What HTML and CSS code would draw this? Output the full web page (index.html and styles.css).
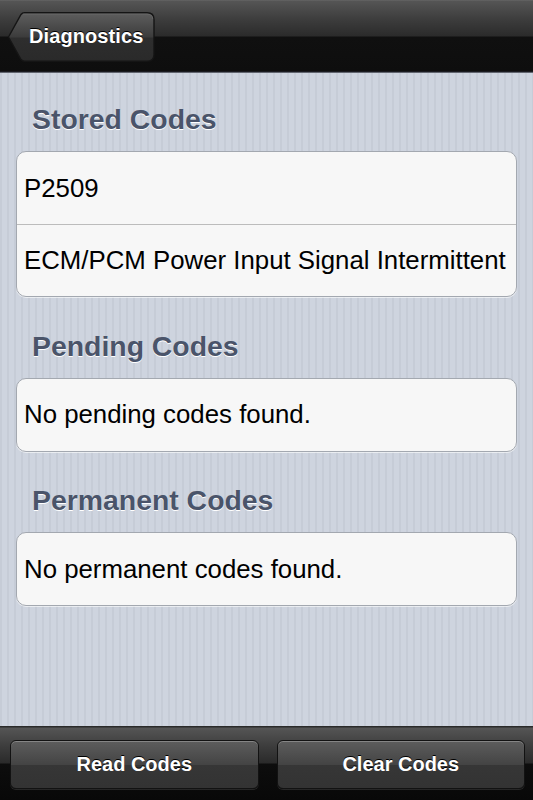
FILE: index.html
```html
<!DOCTYPE html>
<html>
<head>
<meta charset="utf-8">
<link rel="stylesheet" href="styles.css">
</head>
<body>
<div class="screen">
  <header class="navbar">
    <button class="back">
      <svg class="back-shape" width="148" height="50" viewBox="0 0 148 50">
        <defs>
          <linearGradient id="bg" x1="0" y1="0" x2="0" y2="1">
            <stop offset="0" stop-color="#5e5e5e"/>
            <stop offset="0.5" stop-color="#3c3c3c"/>
            <stop offset="0.52" stop-color="#2e2e2e"/>
            <stop offset="1" stop-color="#2a2a2a"/>
          </linearGradient>
        </defs>
        <path d="M1.5 25 L14 2.5 Q15.3 0.8 17.5 0.8 H140 Q147 0.8 147 7.5 V42.5 Q147 49.2 140 49.2 H17.5 Q15.3 49.2 14 47.5 Z" fill="url(#bg)" stroke="#151515" stroke-width="1.4"/>
        <path d="M16 2 H140 Q145.5 2 145.8 7" fill="none" stroke="#777" stroke-width="0.8" opacity="0.6"/>
      </svg>
      <span class="back-label">Diagnostics</span>
    </button>
  </header>

  <main class="content">
    <section class="group">
      <h2 class="group-title">Stored Codes</h2>
      <div class="card">
        <div class="row">P2509</div>
        <div class="row">ECM/PCM Power Input Signal Intermittent</div>
      </div>
    </section>
    <section class="group">
      <h2 class="group-title">Pending Codes</h2>
      <div class="card">
        <div class="row">No pending codes found.</div>
      </div>
    </section>
    <section class="group">
      <h2 class="group-title">Permanent Codes</h2>
      <div class="card">
        <div class="row">No permanent codes found.</div>
      </div>
    </section>
  </main>

  <footer class="toolbar">
    <button class="tool-btn">Read Codes</button>
    <button class="tool-btn">Clear Codes</button>
  </footer>
</div>
</body>
</html>
```

FILE: styles.css
```css
* { box-sizing: border-box; }
html, body { margin: 0; padding: 0; }
body {
  width: 533px;
  height: 800px;
  overflow: hidden;
  font-family: "Liberation Sans", Arial, sans-serif;
}
.screen {
  display: flex;
  flex-direction: column;
  height: 800px;
  background: repeating-linear-gradient(90deg, #c6ccd7 0px, #c6ccd7 2px, #ced4df 2px, #ced4df 7px);
}
.navbar {
  height: 73px;
  flex: none;
  display: flex;
  align-items: center;
  padding: 0 0 0 7px;
  background: linear-gradient(#6a6a6a 0px, #555 1px, #3c3c3c 20px, #2b2b2b 36px, #101010 37px, #0e0e0e 71px, #262832 72px, #9da3ad 73px);
}
.back {
  position: relative;
  width: 148px;
  height: 50px;
  padding: 0;
  border: 0;
  background: none;
  display: flex;
  align-items: center;
  justify-content: flex-start;
}
.back-shape {
  position: absolute;
  left: 0;
  top: 0;
}
.back-label {
  position: relative;
  padding-left: 22px;
  color: #fff;
  font-family: "Liberation Sans", Arial, sans-serif;
  font-weight: bold;
  font-size: 20px;
  text-shadow: 0 -1px 0 #000;
  letter-spacing: 0.1px;
}
.content {
  flex: 1;
  padding: 31px 16px 0 16px;
  display: flex;
  flex-direction: column;
  gap: 33.5px;
}
.group-title {
  margin: 0 0 17px 0;
  padding-left: 16px;
  height: 30px;
  line-height: 30px;
  font-size: 28.4px;
  font-weight: bold;
  color: #4a546a;
  text-shadow: 0 1px 0 #fff;
}
.card {
  background: #f7f7f7;
  border: 1px solid #a3a8b0;
  border-radius: 10px;
  box-shadow: 0 1px 0 rgba(255,255,255,0.6);
}
.row {
  height: 72px;
  display: flex;
  align-items: center;
  padding-left: 7px;
  font-size: 25.8px;
  color: #000;
  white-space: nowrap;
}
.row + .row {
  border-top: 1px solid #bcbcbc;
  height: 72px;
}
.toolbar {
  flex: none;
  height: 74px;
  display: flex;
  gap: 18px;
  padding: 14px 8px 0 10px;
  background: linear-gradient(#2a2a2a 0px, #2a2a2a 1px, #555 2px, #3d3d3d 20px, #2a2a2a 37px, #0d0d0d 38px, #080808 74px);
}
.tool-btn {
  flex: 1;
  height: 49px;
  border: 1px solid #121212;
  border-radius: 6px;
  background: linear-gradient(#5d5d5d, #444 50%, #363636 51%, #333);
  box-shadow: inset 0 1px 0 rgba(255,255,255,0.25), 0 1px 0 rgba(255,255,255,0.12);
  color: #fff;
  font-family: "Liberation Sans", Arial, sans-serif;
  font-weight: bold;
  font-size: 20px;
  text-shadow: 0 -1px 0 #000;
  padding: 0;
}
```
